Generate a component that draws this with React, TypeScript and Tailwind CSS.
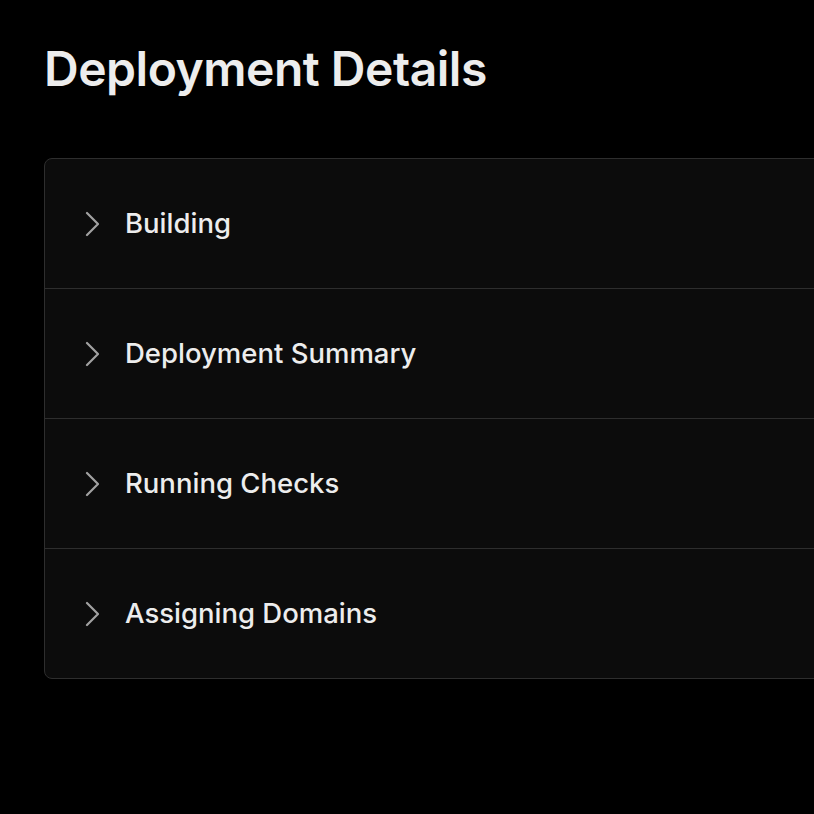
const steps = ["Building", "Deployment Summary", "Running Checks", "Assigning Domains"];

function Chevron() {
  return (
    <svg width="14" height="26" viewBox="0 0 14 26" fill="none" className="shrink-0 text-[#a1a1a1]">
      <path d="M2 2l11 11L2 24" stroke="currentColor" strokeWidth="2.2" strokeLinecap="round" strokeLinejoin="round" />
    </svg>
  );
}

export default function App() {
  return (
    <div
      className="h-screen w-screen overflow-hidden bg-black pl-[44px] pt-[38px] text-[#ededed]"
      style={{ fontFamily: "Inter, 'Liberation Sans', sans-serif" }}
    >
      <h1 className="text-[48px] font-semibold leading-[62px] tracking-[-0.01em]">Deployment Details</h1>
      <div className="mt-[58px] w-[1000px] overflow-hidden rounded-lg border border-[#2e2e2e] bg-[#0c0c0c]">
        {steps.map((s, i) => (
          <div
            key={s}
            className={`box-content flex h-[129px] items-center gap-[26px] pl-[40px] ${i > 0 ? "border-t border-[#2e2e2e]" : ""}`}
          >
            <Chevron />
            <span className="text-[27.5px] font-medium">{s}</span>
          </div>
        ))}
      </div>
    </div>
  );
}
